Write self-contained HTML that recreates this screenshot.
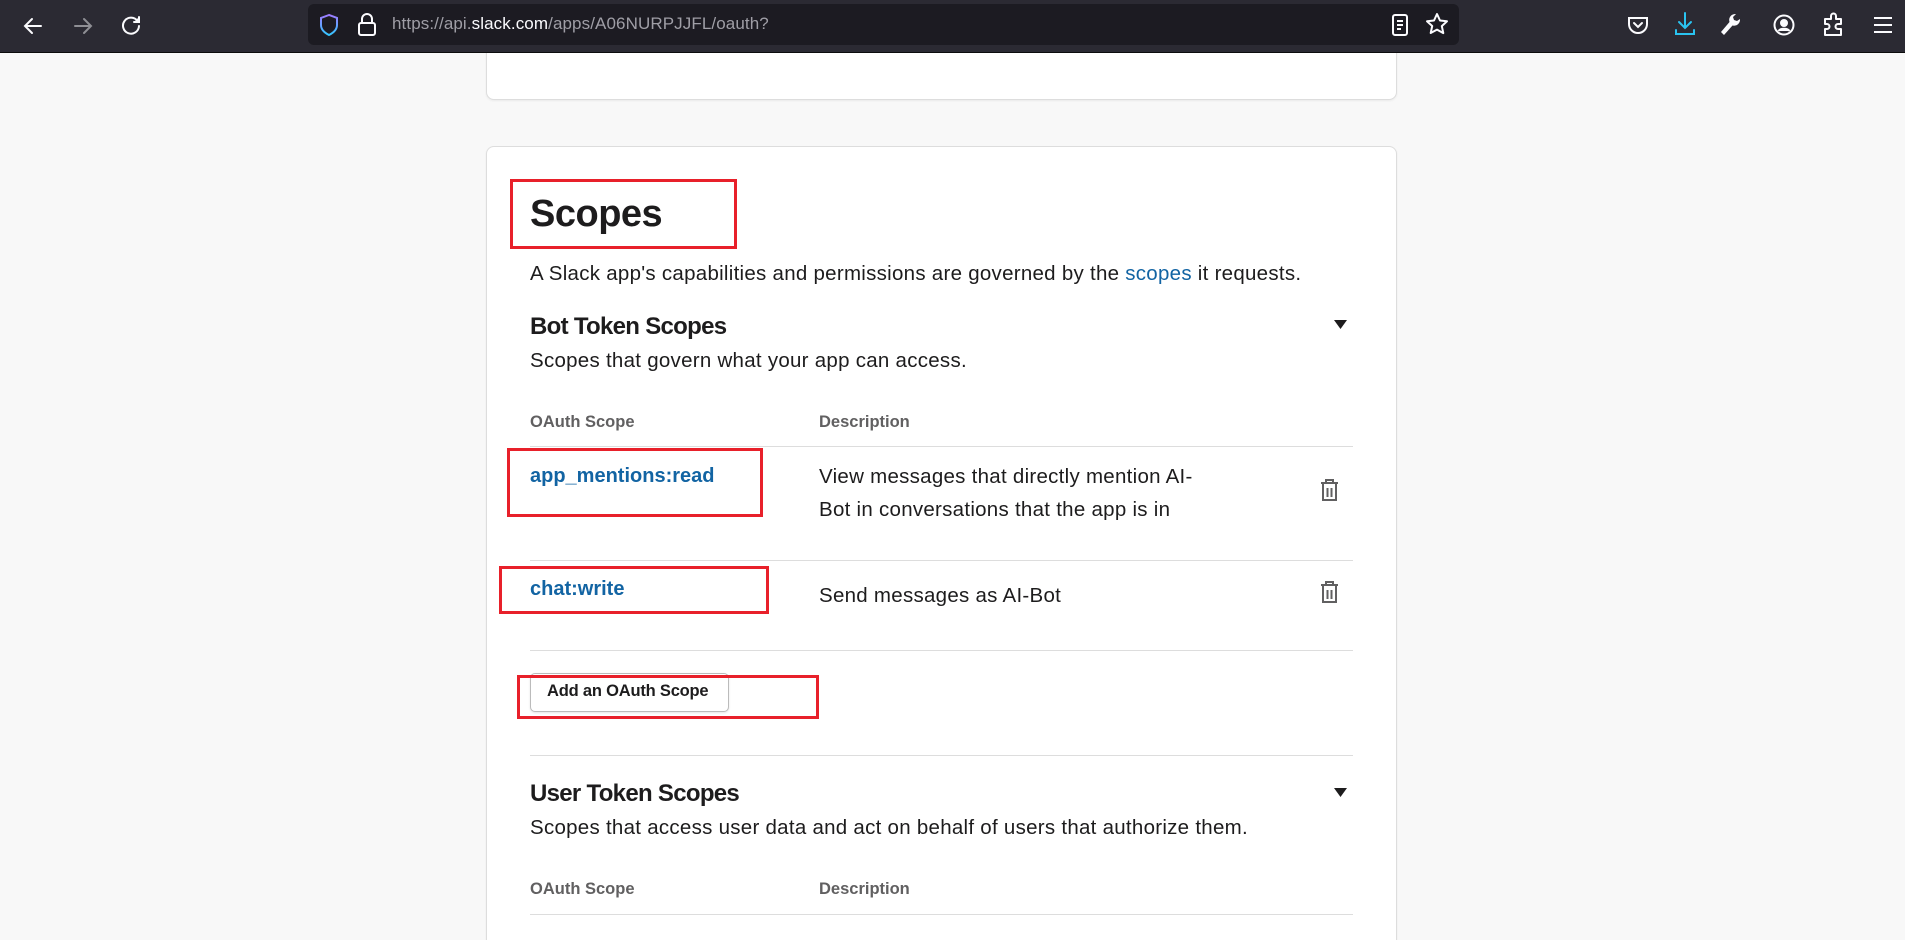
<!DOCTYPE html>
<html style="height:940px;overflow:hidden"><head><meta charset="utf-8">
<style>
*{margin:0;padding:0;box-sizing:border-box}
body{width:1905px;height:940px;overflow:hidden;background:#f8f8f8;font-family:"Liberation Sans",sans-serif;position:relative;color:#1d1c1d}
.a{position:absolute;white-space:nowrap}
.t{z-index:5}
.tb{left:0;top:0;width:1905px;height:53px;background:#2b2a33;border-bottom:1px solid #0c0c0d}
.url{left:308px;top:4px;width:1151px;height:41px;background:#1c1b22;border-radius:6px}
.card{background:#fff;border:1px solid #dddddd;border-radius:8px;box-shadow:0 1px 2px rgba(0,0,0,.06)}
.hr{height:1px;background:#dddddd;left:530px;width:823px}
.red{border:3px solid #e8202a}
.body20{font-size:20.5px;letter-spacing:0.27px}
.hd{font-size:16.5px;font-weight:bold;color:#616061;letter-spacing:0px}
.lnk{color:#1264a3;font-weight:bold;font-size:20px;letter-spacing:0px}
</style></head><body>
<div class="a tb t"></div>
<svg class="a t" style="left:20px;top:13px" width="26" height="26" viewBox="0 0 26 26" fill="none" stroke="#fbfbfe" stroke-width="2" stroke-linecap="round"><path d="M21 13H5M12 6l-7 7 7 7"/></svg>
<svg class="a t" style="left:70px;top:13px" width="26" height="26" viewBox="0 0 26 26" fill="none" stroke="#8f8f95" stroke-width="2" stroke-linecap="round"><path d="M5 13h16M14 6l7 7-7 7"/></svg>
<svg class="a t" style="left:118px;top:12px" width="26" height="26" viewBox="0 0 26 26" fill="none" stroke="#fbfbfe" stroke-width="2" stroke-linecap="round"><path d="M19.5 9A8 8 0 1 0 21 14"/><path d="M21 5v5h-5" fill="#fbfbfe"/></svg>
<div class="a url t"></div>
<svg class="a t" style="left:318px;top:13px" width="22" height="24" viewBox="0 0 22 24" fill="none" stroke-width="2"><defs><linearGradient id="g" x1="0" y1="0" x2="0" y2="1"><stop offset="0" stop-color="#9d7bff"/><stop offset="1" stop-color="#34c6ff"/></linearGradient></defs><path d="M11 2L3 5v7c0 5 4 8 8 10 4-2 8-5 8-10V5z" stroke="url(#g)"/></svg>
<svg class="a t" style="left:356px;top:12px" width="22" height="26" viewBox="0 0 22 26" fill="none" stroke="#fbfbfe" stroke-width="2"><path d="M6 11V7a5 5 0 0 1 10 0v4"/><rect x="3" y="11" width="16" height="12" rx="2"/></svg>
<div class="a t" style="left:392px;top:14px;font-size:17px;color:#9f9ea6;letter-spacing:0.1px">https://api.<span style="color:#fbfbfe">slack.com</span>/apps/A06NURPJJFL/oauth?</div>
<svg class="a t" style="left:1390px;top:13px" width="20" height="24" viewBox="0 0 20 24" fill="none" stroke="#fbfbfe" stroke-width="2"><rect x="3" y="2" width="14" height="20" rx="2"/><path d="M7 8h6M7 12h6M7 16h4"/></svg>
<svg class="a t" style="left:1424px;top:11px" width="26" height="26" viewBox="0 0 26 26" fill="none" stroke="#fbfbfe" stroke-width="2" stroke-linejoin="round"><path d="M13 3l3 6.5 7 .8-5.2 4.8 1.5 7L13 18.6 6.7 22l1.5-7L3 10.3l7-.8z"/></svg>
<svg class="a t" style="left:1626px;top:13px" width="24" height="24" viewBox="0 0 24 24" fill="none" stroke="#fbfbfe" stroke-width="2" stroke-linecap="round"><path d="M3 5h18v6a9 9 0 0 1-18 0z"/><path d="M8 10l4 4 4-4"/></svg>
<svg class="a t" style="left:1673px;top:11px" width="24" height="26" viewBox="0 0 24 26" fill="none" stroke="#2ac3f0" stroke-width="2" stroke-linecap="round"><path d="M12 2v14M6 11l6 6 6-6M3 19v4h18v-4"/></svg>
<svg class="a t" style="left:1718px;top:12px" width="24" height="26" viewBox="0 0 24 26" fill="#fbfbfe"><path d="M17 2a6 6 0 0 0-5.5 8L3 20l3 3 8.5-9.5A6 6 0 0 0 22 7l-3 2-3-1-1-3 3-3z"/></svg>
<svg class="a t" style="left:1772px;top:13px" width="24" height="24" viewBox="0 0 24 24" fill="none" stroke="#fbfbfe" stroke-width="2"><circle cx="12" cy="12" r="9.5"/><circle cx="12" cy="10" r="3" fill="#fbfbfe"/><path d="M6.5 18c2-3 9-3 11 0" fill="#fbfbfe"/></svg>
<svg class="a t" style="left:1821px;top:12px" width="24" height="26" viewBox="0 0 24 26" fill="none" stroke="#fbfbfe" stroke-width="2" stroke-linejoin="round"><path d="M10 4a2.5 2.5 0 0 1 5 0v3h5v5h-3a2.5 2.5 0 0 0 0 5h3v6H4v-6h2a2.5 2.5 0 0 0 0-5H4V7h6z"/></svg>
<svg class="a t" style="left:1872px;top:15px" width="22" height="20" viewBox="0 0 22 20" stroke="#fbfbfe" stroke-width="2"><path d="M2 3h18M2 10h18M2 17h18"/></svg>

<div class="a card" style="left:486px;top:20px;width:911px;height:80px"></div>
<div class="a card" style="left:486px;top:146px;width:911px;height:794px;border-bottom:none;border-radius:8px 8px 0 0"></div>

<div class="a" style="left:530px;top:193px;font-size:38px;font-weight:bold;letter-spacing:-0.5px">Scopes</div>
<div class="a red" style="left:510px;top:179px;width:227px;height:70px"></div>
<div class="a body20" style="left:530px;top:262px">A Slack app's capabilities and permissions are governed by the <span style="color:#1264a3">scopes</span> it requests.</div>

<div class="a" style="left:530px;top:313px;font-size:24px;font-weight:bold;letter-spacing:-0.7px">Bot Token Scopes</div>
<svg class="a" style="left:1334px;top:320px" width="13" height="9" viewBox="0 0 13 9"><path d="M0 0h13L6.5 9z" fill="#1d1c1d"/></svg>
<div class="a body20" style="left:530px;top:349px">Scopes that govern what your app can access.</div>

<div class="a hd" style="left:530px;top:413px">OAuth Scope</div>
<div class="a hd" style="left:819px;top:413px">Description</div>
<div class="a hr" style="top:446px"></div>

<div class="a lnk" style="left:530px;top:465px">app_mentions:read</div>
<div class="a red" style="left:507px;top:448px;width:256px;height:69px"></div>
<div class="a body20" style="left:819px;top:465px">View messages that directly mention AI-</div>
<div class="a body20" style="left:819px;top:498px">Bot in conversations that the app is in</div>
<svg class="a" style="left:1319px;top:478px" width="21" height="25" viewBox="0 0 21 25" fill="none" stroke="#616061" stroke-width="2"><path d="M7 4V2h7v2M2 5h17M4 6v16h13V6"/><path d="M8.5 10v9M12.5 10v9"/></svg>
<div class="a hr" style="top:560px"></div>

<div class="a lnk" style="left:530px;top:578px">chat:write</div>
<div class="a red" style="left:499px;top:566px;width:270px;height:48px"></div>
<div class="a body20" style="left:819px;top:584px">Send messages as AI-Bot</div>
<svg class="a" style="left:1319px;top:580px" width="21" height="25" viewBox="0 0 21 25" fill="none" stroke="#616061" stroke-width="2"><path d="M7 4V2h7v2M2 5h17M4 6v16h13V6"/><path d="M8.5 10v9M12.5 10v9"/></svg>
<div class="a hr" style="top:650px"></div>

<div class="a" style="left:530px;top:673px;width:199px;height:39px;border:1px solid #bbbbbb;border-radius:5px;background:#fff;box-shadow:0 1px 2px rgba(0,0,0,.1)"></div>
<div class="a" style="left:547px;top:682px;font-size:16.5px;font-weight:bold;letter-spacing:-0.2px">Add an OAuth Scope</div>
<div class="a red" style="left:517px;top:675px;width:302px;height:44px"></div>
<div class="a hr" style="top:755px"></div>

<div class="a" style="left:530px;top:780px;font-size:24px;font-weight:bold;letter-spacing:-0.7px">User Token Scopes</div>
<svg class="a" style="left:1334px;top:788px" width="13" height="9" viewBox="0 0 13 9"><path d="M0 0h13L6.5 9z" fill="#1d1c1d"/></svg>
<div class="a body20" style="left:530px;top:816px">Scopes that access user data and act on behalf of users that authorize them.</div>
<div class="a hd" style="left:530px;top:880px">OAuth Scope</div>
<div class="a hd" style="left:819px;top:880px">Description</div>
<div class="a hr" style="top:914px"></div>
</body></html>
